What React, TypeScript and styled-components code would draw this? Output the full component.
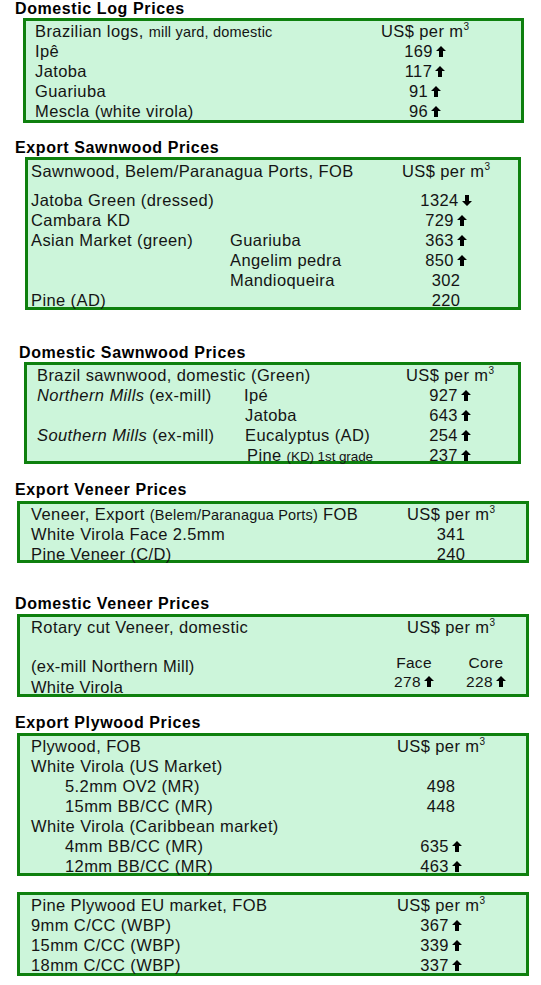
import React from "react";
import styled, { createGlobalStyle } from "styled-components";

const Global = createGlobalStyle`
  html, body { margin: 0; padding: 0; background: #ffffff; }
  body {
    font-family: "Liberation Sans", Arial, sans-serif;
    color: #141414;
  }
`;

const Page = styled.div`
  width: 541px;
  display: flex;
  flex-direction: column;
`;

const Section = styled.section<{ $mt: number }>`
  display: flex;
  flex-direction: column;
  margin-top: ${(p) => p.$mt}px;
`;

const Title = styled.h2<{ $x: number }>`
  margin: 0;
  padding-left: ${(p) => p.$x}px;
  height: 18px;
  font-size: 16px;
  line-height: 18px;
  font-weight: 700;
  letter-spacing: 0.6px;
  color: #000;
  white-space: nowrap;
`;

const Box = styled.div<{ $x: number; $w: number; $h: number; $pl: number; $gap?: number }>`
  box-sizing: border-box;
  margin-left: ${(p) => p.$x}px;
  margin-top: ${(p) => p.$gap ?? 0}px;
  width: ${(p) => p.$w}px;
  height: ${(p) => p.$h}px;
  border: 3px solid #0e800e;
  background: #ccf5da;
  padding-left: ${(p) => p.$pl}px;
  padding-top: 0;
  display: flex;
  flex-direction: column;
`;

const Row = styled.div<{ $cols: string; $h?: number; $mt?: number }>`
  display: grid;
  grid-template-columns: ${(p) => p.$cols};
  height: ${(p) => p.$h ?? 20}px;
  margin-top: ${(p) => p.$mt ?? 0}px;
  line-height: 20px;
  font-size: 16.5px;
  letter-spacing: 0.4px;
  white-space: nowrap;
`;

const Label = styled.span<{ $indent?: number; $span?: number }>`
  padding-left: ${(p) => p.$indent ?? 0}px;
  grid-column: span ${(p) => p.$span ?? 1};
`;

const Value = styled.span`
  text-align: center;
`;

const Small = styled.span<{ $fs?: number; $ls?: number }>`
  font-size: ${(p) => p.$fs ?? 14.5}px;
  letter-spacing: ${(p) => p.$ls ?? 0.2}px;
`;

const Em = styled.em`
  font-style: italic;
`;

const Sup = styled.sup`
  font-size: 10px;
  line-height: 0;
  vertical-align: 7px;
  letter-spacing: 0;
`;

const Spacer = styled.div<{ $h: number }>`
  height: ${(p) => p.$h}px;
  flex: none;
`;

const Split = styled.div<{ $cols: string; $mt: number }>`
  display: grid;
  grid-template-columns: ${(p) => p.$cols};
  margin-top: ${(p) => p.$mt}px;
  white-space: nowrap;
`;

const Stack = styled.div<{ $pt: number; $lh: number; $fs: number; $center?: boolean }>`
  display: flex;
  flex-direction: column;
  padding-top: ${(p) => p.$pt}px;
  line-height: ${(p) => p.$lh}px;
  font-size: ${(p) => p.$fs}px;
  letter-spacing: 0.3px;
  text-align: ${(p) => (p.$center ? "center" : "left")};
`;

const ArrowSvg = styled.svg`
  display: inline-block;
  margin-left: 3px;
  vertical-align: baseline;
`;

const Arrow: React.FC<{ down?: boolean }> = ({ down }) => (
  <ArrowSvg width="10" height="11" viewBox="0 0 10 11" aria-hidden>
    {down ? (
      <polygon points="3,0 7,0 7,6 10,6 5,11 0,6 3,6" fill="#000" />
    ) : (
      <polygon points="5,0 10,5 7,5 7,11 3,11 3,5 0,5" fill="#000" />
    )}
  </ArrowSvg>
);

const Unit = () => (
  <>
    US$ per m<Sup>3</Sup>
  </>
);

const Up: React.FC<{ v: string }> = ({ v }) => (
  <>
    {v}
    <Arrow />
  </>
);

const C1 = "1fr 100px 46px";
const C2 = "199px 1fr 100px 22px";
const C3 = "207px 1fr 100px 18px";
const C4 = "1fr 100px 25px";
const C6 = "1fr 100px 35px";

export default function App() {
  return (
    <Page>
      <Global />

      <Section $mt={0}>
        <Title $x={15}>Domestic Log Prices</Title>
        <Box $x={23} $w={501} $h={105} $pl={9}>
          <Row $cols={C1}>
            <Label>
              Brazilian logs, <Small>mill yard, domestic</Small>
            </Label>
            <Value>
              <Unit />
            </Value>
          </Row>
          <Row $cols={C1}>
            <Label>Ipê</Label>
            <Value>
              <Up v="169" />
            </Value>
          </Row>
          <Row $cols={C1}>
            <Label>Jatoba</Label>
            <Value>
              <Up v="117" />
            </Value>
          </Row>
          <Row $cols={C1}>
            <Label>Guariuba</Label>
            <Value>
              <Up v="91" />
            </Value>
          </Row>
          <Row $cols={C1}>
            <Label>Mescla (white virola)</Label>
            <Value>
              <Up v="96" />
            </Value>
          </Row>
        </Box>
      </Section>

      <Section $mt={16}>
        <Title $x={15}>Export Sawnwood Prices</Title>
        <Box $x={25} $w={496} $h={153} $pl={3}>
          <Spacer $h={1} />
          <Row $cols={C2}>
            <Label $span={2}>Sawnwood, Belem/Paranagua Ports, FOB</Label>
            <Value>
              <Unit />
            </Value>
          </Row>
          <Spacer $h={9} />
          <Row $cols={C2}>
            <Label $span={2}>Jatoba Green (dressed)</Label>
            <Value>
              1324
              <Arrow down />
            </Value>
          </Row>
          <Row $cols={C2}>
            <Label $span={2}>Cambara KD</Label>
            <Value>
              <Up v="729" />
            </Value>
          </Row>
          <Row $cols={C2}>
            <Label>Asian Market (green)</Label>
            <Label>Guariuba</Label>
            <Value>
              <Up v="363" />
            </Value>
          </Row>
          <Row $cols={C2}>
            <Label />
            <Label>Angelim pedra</Label>
            <Value>
              <Up v="850" />
            </Value>
          </Row>
          <Row $cols={C2}>
            <Label />
            <Label>Mandioqueira</Label>
            <Value>302</Value>
          </Row>
          <Row $cols={C2}>
            <Label $span={2}>Pine (AD)</Label>
            <Value>220</Value>
          </Row>
        </Box>
      </Section>

      <Section $mt={34}>
        <Title $x={19}>Domestic Sawnwood Prices</Title>
        <Box $x={24} $w={497} $h={102} $pl={10}>
          <Row $cols={C3}>
            <Label $span={2}>Brazil sawnwood, domestic (Green)</Label>
            <Value>
              <Unit />
            </Value>
          </Row>
          <Row $cols={C3}>
            <Label>
              <Em>Northern Mills</Em> (ex-mill)
            </Label>
            <Label>Ipé</Label>
            <Value>
              <Up v="927" />
            </Value>
          </Row>
          <Row $cols={C3}>
            <Label />
            <Label $indent={1}>Jatoba</Label>
            <Value>
              <Up v="643" />
            </Value>
          </Row>
          <Row $cols={C3}>
            <Label>
              <Em>Southern Mills</Em> (ex-mill)
            </Label>
            <Label $indent={1}>Eucalyptus (AD)</Label>
            <Value>
              <Up v="254" />
            </Value>
          </Row>
          <Row $cols={C3}>
            <Label />
            <Label $indent={3}>
              Pine <Small $fs={13.5} $ls={-0.1}>(KD) 1st grade</Small>
            </Label>
            <Value>
              <Up v="237" />
            </Value>
          </Row>
        </Box>
      </Section>

      <Section $mt={17}>
        <Title $x={15}>Export Veneer Prices</Title>
        <Box $x={17} $w={512} $h={62} $pl={11} $gap={2}>
          <Row $cols={C4}>
            <Label>
              Veneer, Export <Small>(Belem/Paranagua Ports)</Small> FOB
            </Label>
            <Value>
              <Unit />
            </Value>
          </Row>
          <Row $cols={C4}>
            <Label>White Virola Face 2.5mm</Label>
            <Value>341</Value>
          </Row>
          <Row $cols={C4}>
            <Label>Pine Veneer (C/D)</Label>
            <Value>240</Value>
          </Row>
        </Box>
      </Section>

      <Section $mt={32}>
        <Title $x={15}>Domestic Veneer Prices</Title>
        <Box $x={17} $w={512} $h={83} $pl={11} $gap={1}>
          <Row $cols={C4}>
            <Label>Rotary cut Veneer, domestic</Label>
            <Value>
              <Unit />
            </Value>
          </Row>
          <Split $cols="1fr 60px 16px 52px 14px" $mt={16}>
            <Stack $pt={3} $lh={20.5} $fs={16.5}>
              <span>(ex-mill Northern Mill)</span>
              <span>White Virola</span>
            </Stack>
            <Stack $pt={0} $lh={19} $fs={15.5} $center>
              <span>Face</span>
              <span>
                <Up v="278" />
              </span>
            </Stack>
            <span />
            <Stack $pt={0} $lh={19} $fs={15.5} $center>
              <span>Core</span>
              <span>
                <Up v="228" />
              </span>
            </Stack>
          </Split>
        </Box>
      </Section>

      <Section $mt={17}>
        <Title $x={15}>Export Plywood Prices</Title>
        <Box $x={17} $w={512} $h={143} $pl={11} $gap={1}>
          <Row $cols={C6}>
            <Label>Plywood, FOB</Label>
            <Value>
              <Unit />
            </Value>
          </Row>
          <Row $cols={C6}>
            <Label>White Virola (US Market)</Label>
            <Value />
          </Row>
          <Row $cols={C6}>
            <Label $indent={34}>5.2mm OV2 (MR)</Label>
            <Value>498</Value>
          </Row>
          <Row $cols={C6}>
            <Label $indent={34}>15mm BB/CC (MR)</Label>
            <Value>448</Value>
          </Row>
          <Row $cols={C6}>
            <Label>White Virola (Caribbean market)</Label>
            <Value />
          </Row>
          <Row $cols={C6}>
            <Label $indent={34}>4mm BB/CC (MR)</Label>
            <Value>
              <Up v="635" />
            </Value>
          </Row>
          <Row $cols={C6}>
            <Label $indent={34}>12mm BB/CC (MR)</Label>
            <Value>
              <Up v="463" />
            </Value>
          </Row>
        </Box>
      </Section>

      <Section $mt={16}>
        <Box $x={17} $w={512} $h={84} $pl={11}>
          <Row $cols={C6}>
            <Label>Pine Plywood EU market, FOB</Label>
            <Value>
              <Unit />
            </Value>
          </Row>
          <Row $cols={C6}>
            <Label>9mm C/CC (WBP)</Label>
            <Value>
              <Up v="367" />
            </Value>
          </Row>
          <Row $cols={C6}>
            <Label>15mm C/CC (WBP)</Label>
            <Value>
              <Up v="339" />
            </Value>
          </Row>
          <Row $cols={C6}>
            <Label>18mm C/CC (WBP)</Label>
            <Value>
              <Up v="337" />
            </Value>
          </Row>
        </Box>
      </Section>
    </Page>
  );
}
